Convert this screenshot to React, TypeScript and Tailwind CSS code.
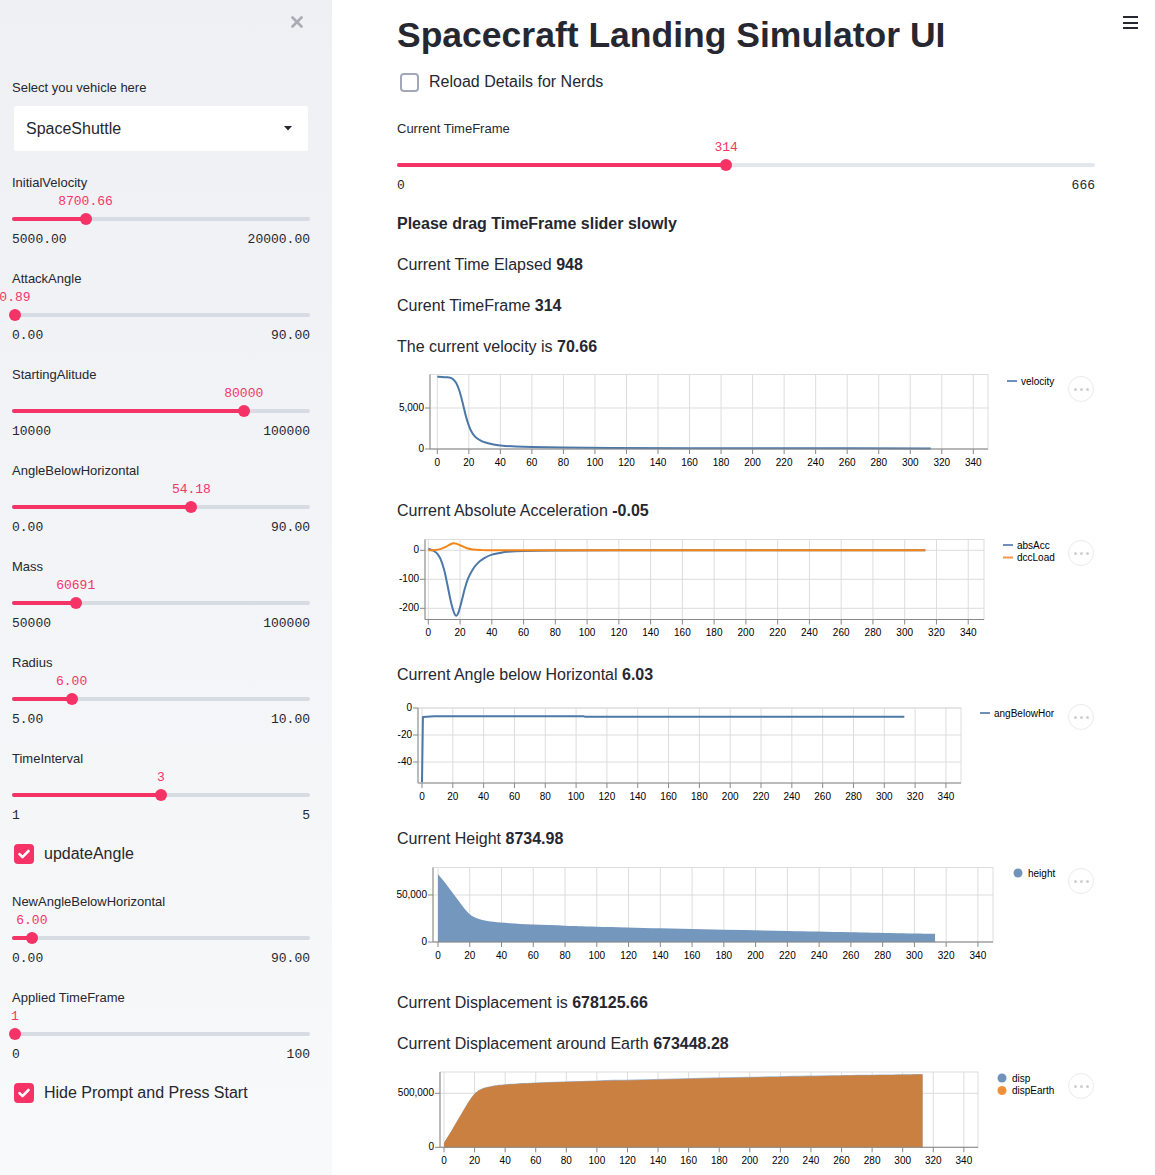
import React from "react";

type Pt = [number, number];
type Series = { color: string; pts: Pt[]; kind: "line" | "area" | "poly" };
type Spec = {
  top: number; h: number; axisX: number; right: number; plotTop: number; plotBottom: number;
  x0: number; xk: number; y0: number; yk: number;
  yticks: [number, string][]; series: Series[];
  legend: { label: string; color: string; dot?: boolean }[]; legendX: number; legendY: number;
};

function smooth(p: Pt[]) {
  let d = `M${p[0][0].toFixed(2)},${p[0][1].toFixed(2)}`;
  for (let i = 0; i < p.length - 1; i++) {
    const p0 = p[i - 1] || p[i], p1 = p[i], p2 = p[i + 1], p3 = p[i + 2] || p2;
    const c1x = p1[0] + (p2[0] - p0[0]) / 6, c1y = p1[1] + (p2[1] - p0[1]) / 6;
    const c2x = p2[0] - (p3[0] - p1[0]) / 6, c2y = p2[1] - (p3[1] - p1[1]) / 6;
    d += `C${c1x.toFixed(2)},${c1y.toFixed(2)} ${c2x.toFixed(2)},${c2y.toFixed(2)} ${p2[0].toFixed(2)},${p2[1].toFixed(2)}`;
  }
  return d;
}

// ---- data (read off the plots) ----
const velocity: Pt[] = [[0,8800],[3,8795],[6,8760],[8,8700],[10,8520],[12,8050],[14,7100],[16,5700],[18,4100],[20,2850],[22,2000],[24,1500],[27,1080],[30,820],[35,580],[40,440],[50,300],[60,230],[80,170],[110,130],[160,100],[220,85],[313,70]];
const absAcc: Pt[] = [[0,6],[2,1],[4,-4],[6,-14],[8,-34],[10,-68],[12,-118],[14,-172],[16,-212],[17.5,-226],[19,-214],[21,-175],[23,-132],[25,-98],[28,-66],[31,-45],[35,-28],[40,-15],[45,-9],[50,-5],[60,-2],[80,-0.5],[120,0],[313,0]];
const dccLoad: Pt[] = [[0,0],[4,1],[8,5],[11,12],[14,21],[16,24],[18,22],[21,15],[24,8],[28,3],[33,1],[45,0],[120,0],[313,0]];
const angle: Pt[] = [[0,-55],[0.6,-6.6],[8,-6.2],[105,-6.2],[106,-6.4],[313,-6.4]];
const height: Pt[] = [[0,72000],[4,64000],[8,55000],[12,46000],[16,37000],[20,29500],[24,25500],[28,23500],[35,21500],[45,20000],[60,18500],[80,17300],[100,16200],[140,14500],[180,13000],[220,11800],[260,10500],[313,8735]];
const dispEarth: Pt[] = [[0,40000],[5,155000],[10,275000],[15,395000],[19,478000],[22,518000],[26,546000],[32,566000],[40,580000],[60,596000],[100,614000],[150,631000],[200,647000],[250,661000],[313,673448]];
const disp: Pt[] = dispEarth.map(([t, v]) => [t, v * 1.008] as Pt);

const charts: Spec[] = [
  {
    top: 366, h: 104, axisX: 430, right: 988, plotTop: 374.5, plotBottom: 449,
    x0: 437.3, xk: 1.5765, y0: 449, yk: 41 / 5000,
    yticks: [[0, "0"], [5000, "5,000"]],
    series: [{ color: "#4c78a8", pts: velocity, kind: "line" }],
    legend: [{ label: "velocity", color: "#6d8fb8" }], legendX: 1007, legendY: 381,
  },
  {
    top: 530, h: 106, axisX: 425, right: 984, plotTop: 539.5, plotBottom: 619.5,
    x0: 428.3, xk: 1.588, y0: 550.3, yk: 0.29,
    yticks: [[0, "0"], [-100, "-100"], [-200, "-200"]],
    series: [
      { color: "#4c78a8", pts: absAcc, kind: "line" },
      { color: "#f58518", pts: dccLoad, kind: "line" },
    ],
    legend: [{ label: "absAcc", color: "#6d8fb8" }, { label: "dccLoad", color: "#f39a4a" }], legendX: 1003, legendY: 545,
  },
  {
    top: 694, h: 106, axisX: 418, right: 961, plotTop: 708, plotBottom: 783,
    x0: 422, xk: 1.541, y0: 708, yk: 1.35,
    yticks: [[0, "0"], [-20, "-20"], [-40, "-40"]],
    series: [{ color: "#4c78a8", pts: angle, kind: "poly" }],
    legend: [{ label: "angBelowHor", color: "#6d8fb8" }], legendX: 980, legendY: 713,
  },
  {
    top: 858, h: 104, axisX: 433, right: 993, plotTop: 867.5, plotBottom: 942,
    x0: 438, xk: 1.588, y0: 942, yk: 47 / 50000,
    yticks: [[0, "0"], [50000, "50,000"]],
    series: [{ color: "#7497bd", pts: height, kind: "area" }],
    legend: [{ label: "height", color: "#7193ba", dot: true }], legendX: 1013, legendY: 873,
  },
  {
    top: 1063, h: 112, axisX: 440, right: 978, plotTop: 1072, plotBottom: 1147.3,
    x0: 444, xk: 1.529, y0: 1147.3, yk: 54 / 500000,
    yticks: [[0, "0"], [500000, "500,000"]],
    series: [
      { color: "#9fb7d4", pts: disp, kind: "area" },
      { color: "#c98040", pts: dispEarth, kind: "area" },
    ],
    legend: [{ label: "disp", color: "#7193ba", dot: true }, { label: "dispEarth", color: "#f0913a", dot: true }], legendX: 997, legendY: 1078,
  },
];

function Chart({ s, className = "" }: { s: Spec; className?: string }) {
  const X = (v: number) => s.x0 + v * s.xk;
  const Y = (v: number) => s.y0 - v * s.yk;
  const xs = Array.from({ length: 18 }, (_, i) => i * 20);
  return (
    <div className={`relative ${className}`}>
      <svg width={698} height={s.h} viewBox={`397 ${s.top} 698 ${s.h}`} overflow="visible" className="block overflow-visible" fontFamily="Liberation Sans, Arial, sans-serif" fontSize={10}>
        <rect x={s.axisX} y={s.plotTop} width={s.right - s.axisX} height={s.plotBottom - s.plotTop} fill="#fff" stroke="#ddd" />
        {xs.map((v) => <line key={v} x1={X(v)} x2={X(v)} y1={s.plotTop} y2={s.plotBottom} stroke="#ddd" />)}
        {s.yticks.map(([v]) => <line key={v} x1={s.axisX} x2={s.right} y1={Y(v)} y2={Y(v)} stroke="#ddd" />)}
        {s.series.map((se, i) => {
          const p = se.pts.map(([t, v]) => [X(t), Y(v)] as Pt);
          if (se.kind === "area") {
            const d = smooth(p) + `L${p[p.length - 1][0]},${s.y0}L${p[0][0]},${s.y0}Z`;
            return <path key={i} d={d} fill={se.color} />;
          }
          const d = se.kind === "poly" ? "M" + p.map((q) => q.join(",")).join("L") : smooth(p);
          return <path key={i} d={d} fill="none" stroke={se.color} strokeWidth={2} strokeLinejoin="round" />;
        })}
        <line x1={s.axisX} x2={s.axisX} y1={s.plotTop} y2={s.plotBottom} stroke="#888" />
        <line x1={s.axisX} x2={s.right} y1={s.plotBottom} y2={s.plotBottom} stroke="#888" />
        {xs.map((v) => (
          <g key={v}>
            <line x1={X(v)} x2={X(v)} y1={s.plotBottom} y2={s.plotBottom + 5} stroke="#888" />
            <text x={X(v)} y={s.plotBottom + 16.5} textAnchor="middle" fill="#000">{v}</text>
          </g>
        ))}
        {s.yticks.map(([v, l]) => (
          <g key={v}>
            <line x1={s.axisX - 5} x2={s.axisX} y1={Y(v)} y2={Y(v)} stroke="#888" />
            <text x={s.axisX - 6} y={Y(v) + 3} textAnchor="end" fill="#000">{l}</text>
          </g>
        ))}
        {s.legend.map((l, i) => {
          const y = s.legendY + i * 12.5;
          return (
            <g key={l.label}>
              {l.dot
                ? <circle cx={s.legendX + 5} cy={y} r={4.5} fill={l.color} />
                : <line x1={s.legendX} x2={s.legendX + 10} y1={y} y2={y} stroke={l.color} strokeWidth={2} />}
              <text x={s.legendX + (l.dot ? 15 : 14)} y={y + 3.5} fill="#000">{l.label}</text>
            </g>
          );
        })}
      </svg>
      <div className="absolute right-[1px] top-[10px] flex h-[26px] w-[26px] items-center justify-center gap-[3px] rounded-full border border-[#ebebeb] bg-white">
        <span className="h-[3px] w-[3px] rounded-full bg-[#cfcfcf]" />
        <span className="h-[3px] w-[3px] rounded-full bg-[#cfcfcf]" />
        <span className="h-[3px] w-[3px] rounded-full bg-[#cfcfcf]" />
      </div>
    </div>
  );
}

function Slider({ label, value, min, max, lo, hi, fmt, track = "bg-[#d6dbe4]" }: {
  label: string; value: number; min: number; max: number; lo: string; hi: string; fmt: string; track?: string;
}) {
  const pct = ((value - min) / (max - min)) * 100;
  return (
    <div className="flex flex-col">
      <div className="h-4 text-[13px] leading-4">{label}</div>
      <div className="relative mt-[3px] h-4">
        <span className="absolute top-0 -translate-x-1/2 whitespace-nowrap font-['Liberation_Mono',monospace] text-[13px] leading-4 text-[#f63366]" style={{ left: `${pct}%` }}>{fmt}</span>
      </div>
      <div className="relative mt-[1px] flex h-4 items-center">
        <div className={`h-1 w-full rounded-full ${track}`} />
        <div className="absolute left-0 h-1 rounded-full bg-[#f63366]" style={{ width: `${pct}%` }} />
        <div className="absolute h-3 w-3 -translate-x-1/2 rounded-full bg-[#f63366]" style={{ left: `${pct}%` }} />
      </div>
      <div className="mt-[5px] flex h-4 justify-between font-['Liberation_Mono',monospace] text-[13px] leading-4">
        <span>{lo}</span><span>{hi}</span>
      </div>
    </div>
  );
}

function Checked({ label }: { label: string }) {
  return (
    <div className="flex h-6 items-center gap-[10px] pl-[2px]">
      <div className="flex h-5 w-5 items-center justify-center rounded-[4px] bg-[#f63366]">
        <svg width="20" height="20" viewBox="0 0 20 20"><path d="M5.5 10.2l3 3 6-6.2" fill="none" stroke="#fff" strokeWidth="2.6" strokeLinecap="round" strokeLinejoin="round" /></svg>
      </div>
      <span className="text-base">{label}</span>
    </div>
  );
}

export default function App() {
  return (
    <div className="flex min-h-[1175px] font-['Liberation_Sans',Arial,sans-serif] text-[#262730]">
      {/* sidebar */}
      <div className="w-[332px] shrink-0 overflow-hidden bg-gradient-to-b from-[#eef0f4] to-[#f8f9fa] pl-3 pr-[22px]">
        <div className="flex h-[44px] items-center justify-end pr-[7px]">
          <svg width="12" height="12" viewBox="0 0 12 12"><path d="M1.5 1.5l9 9M10.5 1.5l-9 9" stroke="#a9acb4" strokeWidth="2.6" strokeLinecap="round" /></svg>
        </div>
        <div className="mt-[36px] h-4 text-[13px] leading-4">Select you vehicle here</div>
        <div className="mx-[2px] mt-[10px] flex h-[45px] items-center justify-between rounded-[2px] bg-white pl-3 pr-4">
          <span className="text-base">SpaceShuttle</span>
          <svg width="8" height="5" viewBox="0 0 8 5"><path d="M0 0h8L4 4.5z" fill="#262730" /></svg>
        </div>
        <div className="mt-[24px] flex flex-col gap-[23px]">
          <Slider label="InitialVelocity" value={8700.66} min={5000} max={20000} lo="5000.00" hi="20000.00" fmt="8700.66" />
          <Slider label="AttackAngle" value={0.89} min={0} max={90} lo="0.00" hi="90.00" fmt="0.89" />
          <Slider label="StartingAlitude" value={80000} min={10000} max={100000} lo="10000" hi="100000" fmt="80000" />
          <Slider label="AngleBelowHorizontal" value={54.18} min={0} max={90} lo="0.00" hi="90.00" fmt="54.18" />
          <Slider label="Mass" value={60691} min={50000} max={100000} lo="50000" hi="100000" fmt="60691" />
          <Slider label="Radius" value={6} min={5} max={10} lo="5.00" hi="10.00" fmt="6.00" />
          <Slider label="TimeInterval" value={3} min={1} max={5} lo="1" hi="5" fmt="3" />
        </div>
        <div className="mt-[18px]"><Checked label="updateAngle" /></div>
        <div className="mt-[28px] flex flex-col gap-[23px]">
          <Slider label="NewAngleBelowHorizontal" value={6} min={0} max={90} lo="0.00" hi="90.00" fmt="6.00" />
          <Slider label="Applied TimeFrame" value={1} min={0} max={100} lo="0" hi="100" fmt="1" />
        </div>
        <div className="mt-[18px]"><Checked label="Hide Prompt and Press Start" /></div>
      </div>

      {/* main */}
      <div className="relative flex-1 bg-white pl-[65px]">
        <div className="absolute right-[17px] top-[16px] flex w-[15px] flex-col gap-[3.5px]">
          <span className="h-[2px] bg-[#262730]" />
          <span className="h-[2px] bg-[#262730]" />
          <span className="h-[2px] bg-[#262730]" />
        </div>
        <div className="w-[698px]">
          <h1 className="mt-[13px] h-[44px] text-[35.5px] font-bold leading-[44px]">Spacecraft Landing Simulator UI</h1>
          <div className="mt-[13px] flex h-6 items-center gap-[10px] pl-[3px]">
            <div className="h-[19px] w-[19px] rounded-[4px] border-2 border-[#a3a8b8] bg-white" />
            <span className="text-base">Reload Details for Nerds</span>
          </div>
          <div className="mt-[27px]">
            <Slider label="Current TimeFrame" value={314} min={0} max={666} lo="0" hi="666" fmt="314" track="bg-[#e3e7ee]" />
          </div>
          <p className="mt-[18px] h-6 text-base font-bold leading-6">Please drag TimeFrame slider slowly</p>
          <p className="mt-[17px] h-6 text-base leading-6">Current Time Elapsed <b>948</b></p>
          <p className="mt-[17px] h-6 text-base leading-6">Curent TimeFrame <b>314</b></p>
          <p className="mt-[17px] h-6 text-base leading-6">The current velocity is <b>70.66</b></p>
          <Chart s={charts[0]} className="mt-[7px]" />
          <p className="mt-[29px] h-6 text-base leading-6">Current Absolute Acceleration <b>-0.05</b></p>
          <Chart s={charts[1]} className="mt-[7px]" />
          <p className="mt-[27px] h-6 text-base leading-6">Current Angle below Horizontal <b>6.03</b></p>
          <Chart s={charts[2]} className="mt-[7px]" />
          <p className="mt-[27px] h-6 text-base leading-6">Current Height <b>8734.98</b></p>
          <Chart s={charts[3]} className="mt-[7px]" />
          <p className="mt-[29px] h-6 text-base leading-6">Current Displacement is <b>678125.66</b></p>
          <p className="mt-[17px] h-6 text-base leading-6">Current Displacement around Earth <b>673448.28</b></p>
          <Chart s={charts[4]} className="mt-[7px]" />
        </div>
      </div>
    </div>
  );
}
